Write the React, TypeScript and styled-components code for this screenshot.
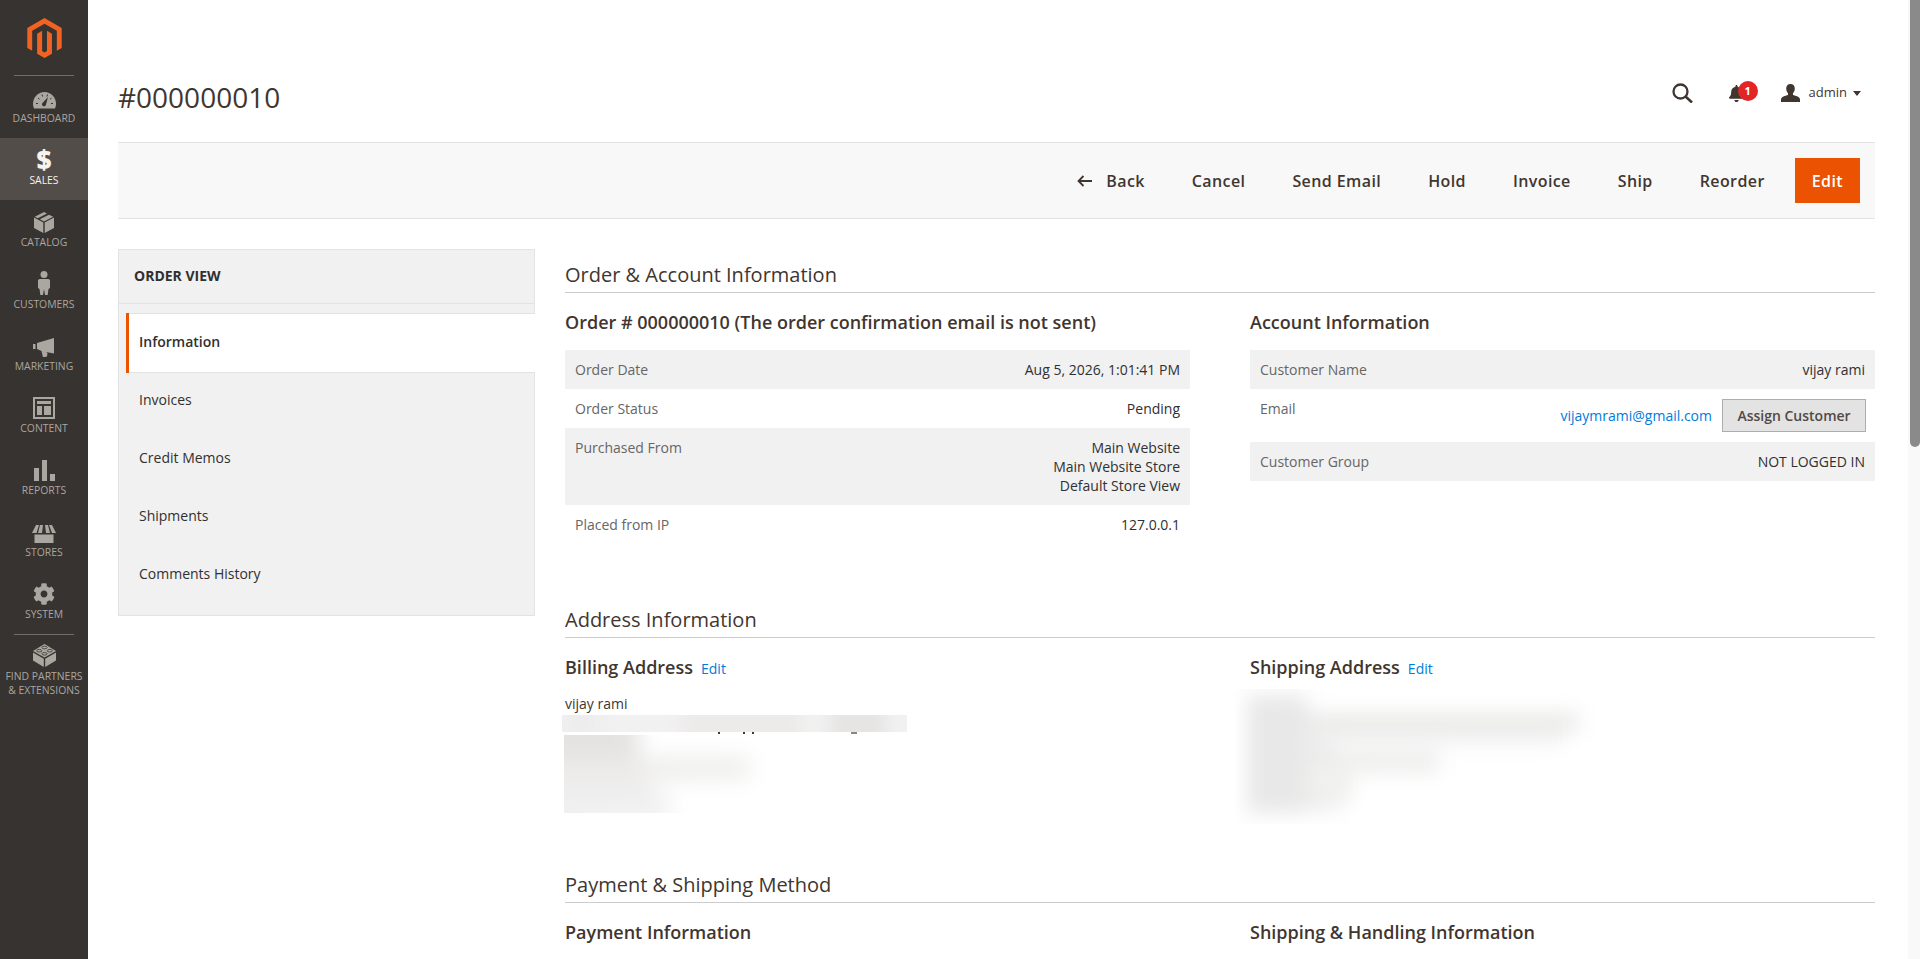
import React from 'react';
import styled, { createGlobalStyle } from 'styled-components';
import { FaBell, FaCog } from 'react-icons/fa';

const ICON = '#aaa6a0';
const INK = '#41362f';
const ORANGE = '#eb5202';

const GlobalStyle = createGlobalStyle`
  html, body {
    margin: 0;
    height: 959px;
    overflow: hidden;
    background: #fff;
  }
  * { box-sizing: border-box; }
  body {
    font-family: "Open Sans", "Liberation Sans", sans-serif;
    font-size: 14px;
    color: ${INK};
  }
`;

const Shell = styled.div`
  display: flex;
  width: 1920px;
  height: 959px;
  overflow: hidden;
`;

/* left menu */
const Menu = styled.nav`
  flex: 0 0 88px;
  background: #373330;
  display: flex;
  flex-direction: column;
`;

const LogoBox = styled.div`
  height: 75px;
  padding: 18px 0 0 27px;
`;

const MenuRule = styled.div`
  height: 1px;
  margin: 0 14px;
  background: #736e69;
`;

const MenuItem = styled.a<{ $active?: boolean }>`
  height: 62px;
  padding-top: 9px;
  display: flex;
  flex-direction: column;
  align-items: center;
  background: ${(p) => (p.$active ? '#524d49' : 'transparent')};
  color: ${(p) => (p.$active ? '#f7f3eb' : ICON)};
`;

const IconSlot = styled.span`
  height: 24px;
  margin-bottom: 3px;
  display: flex;
  align-items: flex-end;
  justify-content: center;
`;

const MenuLabel = styled.span`
  font-size: 10.4px;
  line-height: 13.5px;
  text-align: center;
  white-space: nowrap;
  text-transform: uppercase;
`;

const Dollar = styled.span`
  font-size: 26px;
  line-height: 24px;
  font-weight: 800;
  color: #f7f3eb;
`;

/* content */
const Page = styled.main`
  flex: 1;
  padding: 0 33px 0 30px;
`;

const PageHead = styled.header`
  height: 142px;
  padding-top: 54px;
  display: flex;
  align-items: center;
  justify-content: space-between;
`;

const PageTitle = styled.h1`
  margin: 0 0 2px;
  font-size: 28px;
  line-height: 36px;
  font-weight: 400;
  color: ${INK};
`;

const HeadActions = styled.div`
  display: flex;
  align-items: center;
  margin: 0 14px 10px 0;
`;

const BellWrap = styled.span`
  position: relative;
  display: flex;
  margin: 0 36px 0 35px;
`;

const Badge = styled.span`
  position: absolute;
  left: 10px;
  top: -4px;
  width: 20px;
  height: 20px;
  border-radius: 50%;
  background: #e22626;
  color: #fff;
  font-size: 11px;
  line-height: 20px;
  font-weight: 700;
  text-align: center;
`;

const UserName = styled.span`
  margin: 0 6px 2px 9px;
  font-size: 13px;
`;

const Caret = styled.span`
  width: 0;
  height: 0;
  border-style: solid;
  border-width: 5px 4px 0;
  border-color: ${INK} transparent transparent;
`;

const Toolbar = styled.div`
  height: 77px;
  padding-right: 15px;
  display: flex;
  align-items: center;
  justify-content: flex-end;
  gap: 13px;
  background: #f8f8f8;
  border-top: 1px solid #e3e3e3;
  border-bottom: 1px solid #e3e3e3;
`;

const ToolButton = styled.button<{ $primary?: boolean }>`
  height: 45px;
  padding: 0 17px;
  display: flex;
  align-items: center;
  gap: 14px;
  border: 0;
  background: ${(p) => (p.$primary ? ORANGE : 'transparent')};
  color: ${(p) => (p.$primary ? '#fff' : INK)};
  font-family: inherit;
  font-size: 16px;
  font-weight: 600;
  letter-spacing: 0.025em;
`;

const Columns = styled.div`
  margin-top: 30px;
  display: grid;
  grid-template-columns: 417px 1fr;
  gap: 30px;
  align-items: start;
`;

/* order view tabs */
const TabsPanel = styled.aside`
  height: 367px;
  background: #f1f1f1;
  border: 1px solid #e3e3e3;
`;

const TabsTitle = styled.div`
  height: 54px;
  padding: 0 0 2px 15px;
  display: flex;
  align-items: center;
  border-bottom: 1px solid #e3e3e3;
  font-size: 14px;
  font-weight: 700;
  color: #303030;
  text-transform: uppercase;
`;

const TabList = styled.ul`
  list-style: none;
  margin: 9px 0 0;
  padding: 0 0 0 7px;
`;

const Tab = styled.li<{ $active?: boolean }>`
  height: 58px;
  margin-right: ${(p) => (p.$active ? '-1px' : '0')};
  padding: 0 0 3px 10px;
  display: flex;
  align-items: center;
  font-size: 14px;
  color: #303030;
  font-weight: ${(p) => (p.$active ? 600 : 400)};
  background: ${(p) => (p.$active ? '#fff' : 'transparent')};
  border-left: 3px solid ${(p) => (p.$active ? ORANGE : 'transparent')};
  ${(p) => p.$active && `
    height: 60px;
    margin-bottom: -1px;
    box-shadow: inset 0 1px 0 #e3e3e3, inset 0 -1px 0 #e3e3e3;
  `}
`;

const SectionHead = styled.h2<{ $gap?: number }>`
  margin: ${(p) => p.$gap ?? 0}px 0 0;
  padding: 12px 0 3px;
  border-bottom: 1px solid #cccccc;
  font-size: 20px;
  line-height: 28px;
  font-weight: 400;
  color: ${INK};
`;

const TwoCols = styled.div<{ $height?: number }>`
  display: grid;
  grid-template-columns: 1fr 1fr;
  gap: 60px;
  height: ${(p) => (p.$height ? `${p.$height}px` : 'auto')};
`;

const BlockTitle = styled.h3`
  margin: 17px 0 0;
  display: flex;
  align-items: baseline;
  gap: 8px;
  font-size: 18px;
  line-height: 24px;
  font-weight: 600;
  color: ${INK};
`;

const EditLink = styled.a`
  font-size: 14px;
  font-weight: 400;
  color: #007bdb;
`;

const InfoTable = styled.div`
  margin-top: 16px;
`;

const InfoRow = styled.div`
  display: flex;
  justify-content: space-between;
  padding: 10px;
  line-height: 19px;
  &:nth-child(odd) { background: #f1f1f1; }
`;

const InfoKey = styled.span`
  color: #666;
`;

const InfoValue = styled.span`
  text-align: right;
  color: #303030;
`;

const EmailValue = styled.span`
  display: flex;
  align-items: center;
  gap: 10px;
  margin-right: -1px;
`;

const MailLink = styled.a`
  color: #007bdb;
`;

const AssignButton = styled.button`
  width: 144px;
  height: 33px;
  padding: 0;
  background: #e3e3e3;
  border: 1px solid #adadad;
  font-family: inherit;
  font-size: 14px;
  font-weight: 600;
  color: #514943;
`;

const AddressName = styled.div`
  margin-top: 13px;
  font-size: 14px;
  line-height: 19px;
  color: ${INK};
`;

/* redacted address lines: a blurred layer clipped to a box, so the clip edge stays hard */
const Smudge = styled.div<{ $w: number; $h: number; $left: number; $top: number; $bg?: string }>`
  width: ${(p) => p.$w}px;
  height: ${(p) => p.$h}px;
  margin: ${(p) => p.$top}px 0 0 ${(p) => p.$left}px;
  overflow: hidden;
  background: ${(p) => p.$bg ?? 'transparent'};
`;

const BLEED = 30;

const bars = (list: [number, number, number, number, string][]) => ({
  image: list.map(([, , , , c]) => `linear-gradient(${c}, ${c})`).join(','),
  size: list.map(([, , w, h]) => `${w}px ${h}px`).join(','),
  pos: list.map(([x, y]) => `${x + BLEED}px ${y + BLEED}px`).join(','),
});

const band = bars([
  [268, -10, 56, 40, '#e6e5e4'],
  [120, -10, 120, 40, '#ecebea'],
  [0, -10, 40, 40, '#eeeded'],
]);

const billing = bars([
  [-30, -30, 105, 56, '#e4e3e2'],
  [-30, 22, 215, 22, '#eeedec'],
  [-30, 42, 115, 12, '#ebeaea'],
  [-30, 54, 135, 34, '#f1f0f0'],
  [-30, -30, 50, 140, '#f0efef'],
]);

const shipping = bars([
  [12, 6, 60, 118, '#e9e8e8'],
  [12, 24, 332, 18, '#e9e9e8'],
  [12, 40, 316, 16, '#f3f3f3'],
  [24, 50, 76, 14, '#e8e7e7'],
  [12, 62, 192, 22, '#eeeeed'],
  [12, 86, 106, 26, '#f0f0ef'],
  [12, 110, 92, 12, '#eeeded'],
]);

const Blurred = styled.div<{ $b: { image: string; size: string; pos: string }; $blur: number }>`
  width: calc(100% + ${BLEED * 2}px);
  height: calc(100% + ${BLEED * 2}px);
  margin: -${BLEED}px;
  background-image: ${(p) => p.$b.image};
  background-size: ${(p) => p.$b.size};
  background-position: ${(p) => p.$b.pos};
  background-repeat: no-repeat;
  filter: blur(${(p) => p.$blur}px);
`;

const Descenders = styled.div`
  width: 345px;
  height: 3px;
  margin-left: -3px;
  background-image: linear-gradient(#41362f, #41362f), linear-gradient(#41362f, #41362f),
    linear-gradient(#41362f, #41362f), linear-gradient(#8c8480, #8c8480);
  background-size: 2px 2px, 2px 2px, 2px 2px, 6px 2px;
  background-position: 156px 0, 181px 0, 190px 0, 289px 0;
  background-repeat: no-repeat;
`;

const Scrollbar = styled.div`
  flex: 0 0 12px;
  background: #f9f9f9;
`;

const ScrollThumb = styled.div`
  height: 447px;
  margin-left: 2px;
  background: #8a8a8a;
  border-radius: 0 0 5px 5px;
`;

/* icons drawn after the admin menu set */
const MagentoLogo = () => (
  <svg width="35" height="40" viewBox="0 0 43 50">
    <path fill="#f26322" d="M21.5 0 43 12.4v25l-6.1 3.5V16L21.5 7.1 6.1 16v24.9L0 37.4v-25z" />
    <path fill="#f26322" d="M21.5 50l-9.2-5.4V19.6l6.2-3.6v25.4l3 1.8 3.1-1.8V16l6.2 3.6v25z" />
  </svg>
);

const GaugeIcon = () => (
  <svg width="23" height="17" viewBox="0 0 23 17">
    <path fill={ICON} d="M1 16.5C.3 15 0 13.4 0 11.8 0 5.3 5.1 0 11.5 0S23 5.3 23 11.8c0 1.6-.3 3.2-1 4.7z" />
    <g stroke="#373330" strokeWidth="1">
      <path d="M3 11.5h2M5 6l1.5 1.3M9 2.5l.6 2M14.5 2.5l-.6 2M18.500 6 17 7.300M20 11.500h-2" />
    </g>
    <path fill="#373330" d="M15 5l-2 7.500a2 2 0 1 1-3.500-1.500z" />
  </svg>
);

const BoxIcon = () => (
  <svg width="20" height="21" viewBox="0 0 20 21">
    <path fill={ICON} d="M0 5.500 9.300 10.400V21L0 16zM20 5.500 10.700 10.400V21L20 16zM10 0l3 1.500-9.200 4.800-3-1.600zM15 2.700l4.200 2-9.200 4.700-4.200-2.200z" />
  </svg>
);

const PersonIcon = () => (
  <svg width="12" height="24" viewBox="0 0 12 24">
    <circle cx="6" cy="3.500" r="3.500" fill={ICON} />
    <path fill={ICON} d="M1.500 8h9l1.500 1v8l-1.500 1-.8 6H7l-1-6-1 6H2.300l-.8-6L0 17V9z" />
  </svg>
);

const MegaphoneIcon = () => (
  <svg width="22" height="19" viewBox="0 0 22 19">
    <path fill={ICON} d="M0 6h2.500v5H0zM4 5 21 0v15.500l-8-1.500 1.500 1-.5 3.500-4 1-1.500-6.500L4 11z" />
  </svg>
);

const LayoutIcon = () => (
  <svg width="22" height="22" viewBox="0 0 22 22">
    <path fill={ICON} fillRule="evenodd" d="M0 0h22v22H0zM2 2v18h18V2zM4 4h14v3H4zM4 9h5v9H4zM11 9h7v9h-7z" />
  </svg>
);

const BarsIcon = () => (
  <svg width="21" height="21" viewBox="0 0 21 21">
    <path fill={ICON} d="M0 8h5v13H0zM8 0h5v21H8zM16 14h5v7h-5z" />
  </svg>
);

const StoreIcon = () => (
  <svg width="24" height="18" viewBox="0 0 24 18">
    <path fill={ICON} d="M4 0h3L4.500 8H0zM8 0h3l-1 8H6zM13 0h3l2 8h-4zM17 0h3l4 8h-4zM2.500 9.500h19V18h-19z" />
  </svg>
);

const BrickIcon = () => (
  <svg width="23" height="23" viewBox="0 0 23 23">
    <path fill={ICON} d="M0 7 11.500 0 23 7l-11.500 6.500z" />
    <path fill={ICON} d="M0 8.500 10.800 14.700V23L0 16.500zM23 8.500 12.200 14.700V23L23 16.500z" />
    <g fill="none" stroke="#373330" strokeWidth=".8">
      <ellipse cx="11.500" cy="3.500" rx="2.600" ry="1.300" />
      <ellipse cx="6.200" cy="6.700" rx="2.600" ry="1.300" />
      <ellipse cx="16.800" cy="6.700" rx="2.600" ry="1.300" />
      <ellipse cx="11.500" cy="9.800" rx="2.600" ry="1.300" />
    </g>
  </svg>
);

const SearchIcon = () => (
  <svg width="21" height="20" viewBox="0 0 21 20" fill="none" stroke={INK}>
    <circle cx="8.500" cy="8.500" r="7" strokeWidth="2.300" />
    <path d="M13.500 13.500 20 19.500" strokeWidth="2.600" />
  </svg>
);

const UserIcon = () => (
  <svg width="19" height="18" viewBox="0 0 19 18">
    <path
      fill={INK}
      d="M9.500 0c2.800 0 4.300 2 4.300 4.600 0 2-.8 3.700-1.800 4.700v1.700c2.700.8 7 1.700 7 4.400V18H0v-2.600c0-2.700 4.300-3.600 7-4.400V9.300C6 8.300 5.200 6.600 5.200 4.600 5.200 2 6.700 0 9.500 0z"
    />
  </svg>
);

const BackArrow = () => (
  <svg width="15" height="12" viewBox="0 0 15 12" fill="none" stroke={INK} strokeWidth="1.800">
    <path d="M15 6H1.500M6.500 1 1.500 6l5 5" />
  </svg>
);

const menuItems: { label: React.ReactNode; icon: React.ReactNode; active?: boolean }[] = [
  { label: 'Dashboard', icon: <GaugeIcon /> },
  { label: 'Sales', icon: <Dollar>$</Dollar>, active: true },
  { label: 'Catalog', icon: <BoxIcon /> },
  { label: 'Customers', icon: <PersonIcon /> },
  { label: 'Marketing', icon: <MegaphoneIcon /> },
  { label: 'Content', icon: <LayoutIcon /> },
  { label: 'Reports', icon: <BarsIcon /> },
  { label: 'Stores', icon: <StoreIcon /> },
  { label: 'System', icon: <FaCog size={22} color={ICON} /> },
];

const tools = ['Cancel', 'Send Email', 'Hold', 'Invoice', 'Ship', 'Reorder'];
const tabs = ['Invoices', 'Credit Memos', 'Shipments', 'Comments History'];

export default function App() {
  return (
    <Shell>
      <GlobalStyle />
      <Menu>
        <LogoBox>
          <MagentoLogo />
        </LogoBox>
        <MenuRule />
        {menuItems.map((item, i) => (
          <MenuItem key={i} $active={item.active}>
            <IconSlot>{item.icon}</IconSlot>
            <MenuLabel>{item.label}</MenuLabel>
          </MenuItem>
        ))}
        <MenuRule />
        <MenuItem>
          <IconSlot>
            <BrickIcon />
          </IconSlot>
          <MenuLabel>
            Find Partners
            <br />& Extensions
          </MenuLabel>
        </MenuItem>
      </Menu>

      <Page>
        <PageHead>
          <PageTitle>#000000010</PageTitle>
          <HeadActions>
            <SearchIcon />
            <BellWrap>
              <FaBell size={17} color={INK} />
              <Badge>1</Badge>
            </BellWrap>
            <UserIcon />
            <UserName>admin</UserName>
            <Caret />
          </HeadActions>
        </PageHead>

        <Toolbar>
          <ToolButton>
            <BackArrow />
            Back
          </ToolButton>
          {tools.map((t) => (
            <ToolButton key={t}>{t}</ToolButton>
          ))}
          <ToolButton $primary>Edit</ToolButton>
        </Toolbar>

        <Columns>
          <TabsPanel>
            <TabsTitle>Order View</TabsTitle>
            <TabList>
              <Tab $active>Information</Tab>
              {tabs.map((t) => (
                <Tab key={t}>{t}</Tab>
              ))}
            </TabList>
          </TabsPanel>

          <div>
            <SectionHead>Order &amp; Account Information</SectionHead>
            <TwoCols>
              <div>
                <BlockTitle>Order # 000000010 (The order confirmation email is not sent)</BlockTitle>
                <InfoTable>
                  <InfoRow>
                    <InfoKey>Order Date</InfoKey>
                    <InfoValue>Aug 5, 2026, 1:01:41 PM</InfoValue>
                  </InfoRow>
                  <InfoRow>
                    <InfoKey>Order Status</InfoKey>
                    <InfoValue>Pending</InfoValue>
                  </InfoRow>
                  <InfoRow>
                    <InfoKey>Purchased From</InfoKey>
                    <InfoValue>
                      Main Website
                      <br />
                      Main Website Store
                      <br />
                      Default Store View
                    </InfoValue>
                  </InfoRow>
                  <InfoRow>
                    <InfoKey>Placed from IP</InfoKey>
                    <InfoValue>127.0.0.1</InfoValue>
                  </InfoRow>
                </InfoTable>
              </div>
              <div>
                <BlockTitle>Account Information</BlockTitle>
                <InfoTable>
                  <InfoRow>
                    <InfoKey>Customer Name</InfoKey>
                    <InfoValue>vijay rami</InfoValue>
                  </InfoRow>
                  <InfoRow>
                    <InfoKey>Email</InfoKey>
                    <EmailValue>
                      <MailLink>vijaymrami@gmail.com</MailLink>
                      <AssignButton>Assign Customer</AssignButton>
                    </EmailValue>
                  </InfoRow>
                  <InfoRow>
                    <InfoKey>Customer Group</InfoKey>
                    <InfoValue>NOT LOGGED IN</InfoValue>
                  </InfoRow>
                </InfoTable>
              </div>
            </TwoCols>

            <SectionHead $gap={50}>Address Information</SectionHead>
            <TwoCols $height={221}>
              <div>
                <BlockTitle>
                  Billing Address <EditLink>Edit</EditLink>
                </BlockTitle>
                <AddressName>vijay rami</AddressName>
                <Smudge $w={345} $h={17} $left={-3} $top={2} $bg="#f2f1f1">
                  <Blurred $b={band} $blur={7} />
                </Smudge>
                <Descenders />
                <Smudge $w={210} $h={78} $left={-1} $top={0}>
                  <Blurred $b={billing} $blur={11} />
                </Smudge>
              </div>
              <div>
                <BlockTitle>
                  Shipping Address <EditLink>Edit</EditLink>
                </BlockTitle>
                <Smudge $w={370} $h={135} $left={-15} $top={8}>
                  <Blurred $b={shipping} $blur={10} />
                </Smudge>
              </div>
            </TwoCols>

            <SectionHead>Payment &amp; Shipping Method</SectionHead>
            <TwoCols>
              <BlockTitle>Payment Information</BlockTitle>
              <BlockTitle>Shipping &amp; Handling Information</BlockTitle>
            </TwoCols>
          </div>
        </Columns>
      </Page>

      <Scrollbar>
        <ScrollThumb />
      </Scrollbar>
    </Shell>
  );
}
